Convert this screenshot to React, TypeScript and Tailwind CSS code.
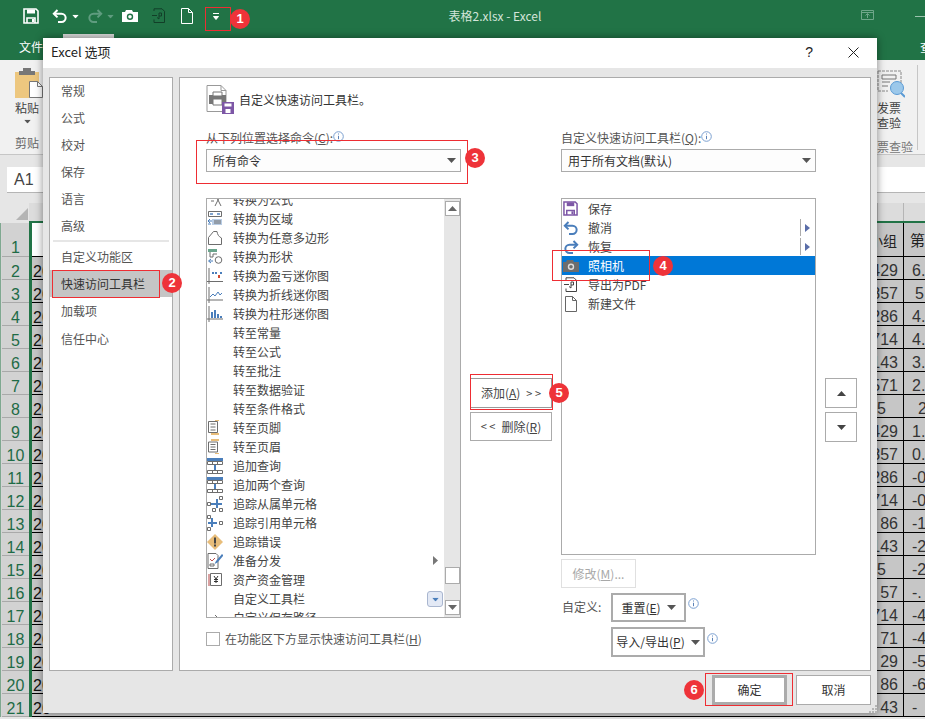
import type { ReactNode } from 'react';

const FONT = 'font-["Noto_Sans_CJK_SC","Liberation_Sans",sans-serif]';

const BLUE = '#4a7ebb';
const GREY = '#6d6d6d';
const ORANGE = '#e8bd7a';

const Svg = ({ children, size = 16, className = '' }: { children: ReactNode; size?: number; className?: string }) => (
  <svg width={size} height={size} viewBox="0 0 16 16" fill="none" className={className}>
    {children}
  </svg>
);

const Caret = ({ color = '#555', className = '' }: { color?: string; className?: string }) => (
  <svg width="9" height="5" viewBox="0 0 9 5" className={className}>
    <path d="M0 0h9L4.5 5z" fill={color} />
  </svg>
);

const Info = ({ className = '' }: { className?: string }) => (
  <svg width="11" height="11" viewBox="0 0 11 11" fill="none" className={className}>
    <circle cx="5.5" cy="5.5" r="4.8" stroke="#7ba0d0" />
    <path d="M5.5 2.5v1M5.5 4.8v3.4" stroke="#5b82b8" />
  </svg>
);

const SaveIcon = ({ color, size = 16 }: { color: string; size?: number }) => (
  <Svg size={size}>
    <path d="M1 1h12l2 2v12H1z" stroke={color} strokeWidth="1.6" />
    <path d="M4 1.5h8v4H4z" fill={color} />
    <path d="M4 15v-5h8v5" stroke={color} strokeWidth="1.6" />
    <path d="M9 11h2v3H9z" fill={color} />
  </Svg>
);

const UndoIcon = ({ color, flip = false }: { color: string; flip?: boolean }) => (
  <Svg className={flip ? '-scale-x-100' : ''}>
    <path d="M5.5 2 1.8 5.7l3.7 3.7" stroke={color} strokeWidth="2" />
    <path d="M2 5.7h7.5a4 4 0 0 1 0 8.3H6" stroke={color} strokeWidth="2" />
  </Svg>
);

const CameraIcon = ({ color, hole }: { color: string; hole: string }) => (
  <Svg>
    <path d="M0 4h3l1-2h6l1 2h5v10H0z" fill={color} />
    <circle cx="8" cy="8.7" r="3.2" fill={hole} />
    <circle cx="8" cy="8.7" r="1.8" fill={color} />
  </Svg>
);

const PageIcon = ({ color }: { color: string }) => (
  <Svg>
    <path d="M2.5.5h7l4 4v11h-11z" stroke={color} />
    <path d="M9.5.5v4h4" stroke={color} />
  </Svg>
);

const PdfIcon = ({ color }: { color: string }) => (
  <Svg>
    <path d="M3 3V.8h8l2.5 2.5v11.200H3v-3" stroke={color} />
    <path d="M8 5h2.500v3H8M8 5v6l-2-1.500M1 7.500h5" stroke={color} />
  </Svg>
);

const RowIcons: Record<string, ReactNode> = {
  formula: (
    <Svg>
      <path d="M1 6V1M1 5h4M8 2l6 12M14 2 8 14M4 9h3" stroke={GREY} />
    </Svg>
  ),
  region: (
    <Svg>
      <path d="M1.5.5h13v5h-13z" stroke={GREY} />
      <path d="M3 2h3v2H3zM10 2h3v2h-3z" fill={BLUE} opacity=".7" />
      <path d="M5 8h10v6H5z" fill="#b9cde5" />
      <path d="M7 10h7M7 12h7" stroke={GREY} />
      <path d="M3 8 1 10l2 2M1 10h4M1 13h3" stroke={BLUE} />
    </Svg>
  ),
  polygon: (
    <Svg>
      <path d="M1.500 14.500V7.500L6.500 1.500h3.500c.5 3 1.500 5 4.500 6.500v6.500z" stroke={GREY} />
    </Svg>
  ),
  shape: (
    <Svg>
      <path d="M1 0h9v3H1z" fill="#6aa58c" />
      <path d="M3 3v5h3V5h4" stroke={GREY} />
      <circle cx="11.5" cy="11" r="3.3" stroke={GREY} />
      <path d="M4 10 1.5 12 4 14M2 12h4" stroke={BLUE} />
    </Svg>
  ),
  winloss: (
    <Svg>
      <path d="M2 0v16M0 13.5h16" stroke={GREY} />
      <path d="M5 4h2v2H5zM8 4h2v2H8zM13 4h2v2h-2z" fill={BLUE} />
      <path d="M11 7h2v3h-2z" fill="#d1482f" />
    </Svg>
  ),
  line: (
    <Svg>
      <path d="M2 0v16M0 13h16" stroke={GREY} />
      <path d="m3 10 3-3 2 2 3-4 2 3 2-2" stroke={BLUE} />
    </Svg>
  ),
  column: (
    <Svg>
      <path d="M2 0v16M0 13h16" stroke={GREY} />
      <path d="M4 6h2v6H4zM7 4h2v8H7zM10 8h2v4h-2zM13 10h2v2h-2z" fill={BLUE} />
    </Svg>
  ),
  footer: (
    <Svg>
      <path d="M1.500 1.500h9v11h-9zM3.500 4h5M3.500 7h5M3.500 10h5" stroke={GREY} />
      <path d="M8 0h4v1H8zM4 13h8v2H4z" fill={ORANGE} />
    </Svg>
  ),
  header: (
    <Svg>
      <path d="M1.500 3h9v10h-9zM3.500 5.500h5M3.500 8h5M3.500 10.500h5" stroke={GREY} />
      <path d="M4 0h8v2H4zM8 14h4v1H8z" fill={ORANGE} />
    </Svg>
  ),
  query: (
    <Svg>
      <path d="M0 0h16v3H0z" fill={BLUE} />
      <path d="M.5 3.500h15v3H.5zM.5 12.500h15v3H.5zM5.500 3.500v3M10.500 3.500v3M5.500 12.500v3M10.500 12.500v3" stroke={GREY} />
      <path d="M7 7h2v5H7z" fill={BLUE} />
    </Svg>
  ),
  dependents: (
    <Svg>
      <path d="M.5 6.500h3v3h-3zM12.500 12.500h3v3h-3zM5.500 12.500h3v3h-3zM12.500.5h3v3h-3z" stroke={GREY} />
      <path d="M10 3v9M6 8h9M4 8h2" stroke={BLUE} strokeWidth="2" />
    </Svg>
  ),
  precedents: (
    <Svg>
      <path d="M.5.5h3v3h-3zM.5 12.500h3v3h-3zM12.500 6.500h3v3h-3z" stroke={GREY} />
      <path d="M5 3v9M1 8h9" stroke={BLUE} strokeWidth="2" />
    </Svg>
  ),
  error: (
    <Svg>
      <path d="M8 0l8 8-8 8-8-8z" fill={ORANGE} />
      <path d="M7 3.500h2v6H7zM7 10.500h2v2H7z" fill="#444" />
    </Svg>
  ),
  prepare: (
    <Svg>
      <path d="M1 .5h8l2 2v13H1z" stroke={GREY} />
      <path d="m3 6 2 2 3-3" stroke="#c0504d" />
      <path d="M3 11h4v2H3z" stroke={GREY} />
      <path d="m15 1-6 7-1.500 3 3-1.500 6-7z" fill={BLUE} />
    </Svg>
  ),
  asset: (
    <Svg>
      <path d="M1 2h2v12H1z" fill="#d9a0a0" />
      <path d="M3.500 1.500h11v12h-11z" stroke={GREY} />
      <path d="m7 4 2 3 2-3M9 7v4M7 7.500h4M7 9.500h4" stroke="#333" />
    </Svg>
  ),
  tail: (
    <Svg>
      <path d="m8 5 3 3" stroke={GREY} />
    </Svg>
  ),
};

const COMMANDS: { label: string; icon?: string }[] = [
  { label: '转换为公式', icon: 'formula' },
  { label: '转换为区域', icon: 'region' },
  { label: '转换为任意多边形', icon: 'polygon' },
  { label: '转换为形状', icon: 'shape' },
  { label: '转换为盈亏迷你图', icon: 'winloss' },
  { label: '转换为折线迷你图', icon: 'line' },
  { label: '转换为柱形迷你图', icon: 'column' },
  { label: '转至常量' },
  { label: '转至公式' },
  { label: '转至批注' },
  { label: '转至数据验证' },
  { label: '转至条件格式' },
  { label: '转至页脚', icon: 'footer' },
  { label: '转至页眉', icon: 'header' },
  { label: '追加查询', icon: 'query' },
  { label: '追加两个查询', icon: 'query' },
  { label: '追踪从属单元格', icon: 'dependents' },
  { label: '追踪引用单元格', icon: 'precedents' },
  { label: '追踪错误', icon: 'error' },
  { label: '准备分发', icon: 'prepare' },
  { label: '资产资金管理', icon: 'asset' },
  { label: '自定义工具栏' },
  { label: '自定义保存路径', icon: 'tail' },
];

const ROW_VALUES = [
  ['429', '6.'], ['857', '5'], ['286', '4.'], ['714', '4.'], ['143', '3.'], ['571', '2.'], ['5', '2'],
  ['429', '1.'], ['857', '0.'], ['286', '-0'], ['714', '-0'], ['86', '-1'], ['143', '-2'], ['5', '-2'],
  ['57', '-.'], ['714', '-4'], ['71', '-4'], ['29', '-5'], ['86', '-6'], ['43', '-'],
];

const NAV_TOP = ['常规', '公式', '校对', '保存', '语言', '高级'];

const MARKS = [
  { n: 1, box: 'left-[205px] top-[7px] w-[26px] h-[24px]', dot: 'left-[230px] top-[9px]' },
  { n: 2, box: 'left-[52px] top-[270px] w-[108px] h-[28px]', dot: 'left-[162px] top-[273px]' },
  { n: 3, box: 'left-[196px] top-[140px] w-[272px] h-[44px]', dot: 'left-[465px] top-[148px]' },
  { n: 4, box: 'left-[552px] top-[250px] w-[98px] h-[31px]', dot: 'left-[653px] top-[256px]' },
  { n: 5, box: 'left-[470px] top-[374px] w-[83px] h-[36px]', dot: 'left-[549px] top-[383px]' },
  { n: 6, box: 'left-[705px] top-[673px] w-[88px] h-[33px]', dot: 'left-[684px] top-[680px]' },
];

function ExcelBehind() {
  return (
    <div className="flex flex-col h-full bg-[#e6e6e6]">
      <div className="h-[38px] pb-[6px] bg-[#217346] flex items-center shrink-0">
        <div className="flex items-center w-[240px] pl-[23px]">
          <SaveIcon color="#ffffff" />
          <div className="ml-[13px]"><UndoIcon color="#ffffff" /></div>
          <Caret color="#ffffff" className="ml-[3px] scale-75" />
          <div className="ml-[7px]"><UndoIcon color="#5f9c7f" flip /></div>
          <Caret color="#5f9c7f" className="ml-[3px] scale-75" />
          <div className="ml-[7px]"><CameraIcon color="#ffffff" hole="#217346" /></div>
          <div className="ml-[13px]"><PdfIcon color="#123f28" /></div>
          <div className="ml-[12px]"><PageIcon color="#ffffff" /></div>
          <svg width="6" height="7" viewBox="0 0 6 7" className="ml-[18px]">
            <path d="M0 .5h6M.5 3.500h5L3 6.500z" stroke="#fff" fill="#fff" strokeWidth="1" />
          </svg>
        </div>
        <div className="flex-1 text-center text-[12px] text-[#d3e5da] pr-[111px]">表格2.xlsx - Excel</div>
        <svg width="14" height="12" viewBox="0 0 14 12" fill="none" className="mr-[40px]">
          <path d="M.5.5h12v9H.5zM.5 2.500h12M6.500 8V4M4.500 5.500l2-2 2 2" stroke="#6ea78a" />
        </svg>
        <div className="w-[10px] h-px bg-[#9cc4ae]" />
      </div>
      <div className="h-[22px] bg-[#217346] shrink-0 flex items-start text-white text-[12px] leading-[18px]">
        <span className="ml-[19px]">文件</span>
        <span className="ml-[20px] -mt-[4px] w-[51px] h-[4px] bg-[#d9d9d9]" />
        <span className="ml-auto mr-[-19px]">查看</span>
      </div>
      <div className="h-[95px] bg-[#f1f1f1] border-b border-[#c6c6c6] shrink-0 flex justify-between">
        <div className="pl-[15px] pt-[8px] flex flex-col text-[12px] leading-[16px] text-[#444]">
          <svg width="28" height="30" viewBox="0 0 28 30">
            <path d="M0 4h24v26H0z" fill="#edc77f" />
            <path d="M8 0h8v3h4v4H4V3h4z" fill="#777" />
            <path d="M14.500 13.500h8l5 5v11h-13z" fill="#fff" stroke="#777" />
            <path d="M22.500 13.500v5h5" fill="none" stroke="#777" />
          </svg>
          <span className="mt-[2px]">粘贴</span>
          <Caret className="ml-[8px] mt-[3px] scale-75" />
          <span className="mt-[11px] text-[#666]">剪贴</span>
        </div>
        <div className="w-[48px] flex">
          <div className="w-[40px] flex flex-col text-[12px] leading-[15px] text-[#444]">
            <svg width="28" height="28" viewBox="0 0 28 28" fill="none" className="mt-[10px]">
              <path d="M1 1h23v17M1 1v20h10" stroke="#888" strokeDasharray="3 1" />
              <path d="M5 5h14v4H5zM5 12h8M5 16h6" stroke="#777" />
              <circle cx="20" cy="18" r="6.500" fill="#9cc8ea" stroke="#5b9bd5" />
              <path d="m24 23 4 4" stroke="#5b9bd5" strokeWidth="2" />
            </svg>
            <span className="mt-[2px]">发票</span>
            <span>查验</span>
            <span className="mt-[9px] text-[#777] whitespace-nowrap">票查验</span>
          </div>
          <div className="w-px h-[85px] mt-[5px] bg-[#c6c6c6]" />
        </div>
      </div>
      <div className="h-[48px] shrink-0 pt-[12px] pl-[7px]">
        <div className="h-[26px] bg-white border-b border-[#b5b5b5] flex items-center">
          <span className="ml-[7px] text-[16px] text-[#444] font-['Liberation_Sans',sans-serif]">A1</span>
        </div>
      </div>
      <div className="h-[20px] shrink-0 flex bg-[#dcdcdc]">
        <div className="w-[29px] pl-[16px] pt-[5px] bg-[#e6e6e6]">
          <div className="w-0 h-0 border-l-[12px] border-l-transparent border-b-[12px] border-b-[#b4b4b4]" />
        </div>
        <div className="flex-1 border-b-2 border-[#217346] flex justify-end">
          <div className="w-[26px] border-l border-[#b5b5b5]" />
          <div className="w-[22px] border-l border-[#b5b5b5]" />
        </div>
      </div>
      <div className="flex h-[34px] shrink-0 font-['Liberation_Sans',sans-serif] text-[16px]">
        <div className="w-[2px] bg-[#d5d5d5] border-l border-[#7fa890]" />
        <div className="w-[27px] bg-[#d2d2d2] border-b border-[#a9a9a9] text-[#1e6b46] text-center flex items-end justify-center leading-[16px]">1</div>
        <div className="w-[3px] bg-[#217346]" />
        <div className="flex-1 bg-white border-b border-black" />
        <div className="w-[26px] bg-[#c6c6c6] border-b border-black flex items-center justify-end whitespace-nowrap pr-[6px] pt-[2px] text-[#222] text-[14px]">
          <span className={FONT}>小组</span>
        </div>
        <div className="w-[22px] bg-[#c6c6c6] border-b border-l border-black pl-[6px] pt-[2px] flex items-center text-[15px] text-[#222] overflow-hidden">
          <span className={FONT}>第</span>
        </div>
      </div>
      {ROW_VALUES.map(([a, b], i) => (
        <div key={i} className="flex h-[23px] shrink-0 font-['Liberation_Sans',sans-serif] text-[16px] leading-[27px]">
          <div className="w-[2px] bg-[#d5d5d5] border-l border-[#7fa890]" />
          <div className="w-[27px] bg-[#d2d2d2] border-b border-[#a9a9a9] text-[#1e6b46] text-center overflow-hidden leading-[30px]">{i + 2}</div>
          <div className="w-[3px] bg-[#217346]" />
          <div className="flex-1 bg-[#c6c6c6] border-b border-black pl-[1px] text-[#111] overflow-hidden leading-[30px]">20</div>
          <div className={`w-[26px] bg-[#c6c6c6] border-b border-black text-[#333] whitespace-nowrap flex justify-end ${a === '5' ? 'pr-[17px]' : 'pr-[5px]'}`}>{a}</div>
          <div className={`w-[22px] bg-[#c6c6c6] border-b border-l border-black text-[#333] overflow-hidden whitespace-nowrap ${b === '2' ? 'pl-[14px]' : b === '5' ? 'pl-[11px]' : 'pl-[8px]'}`}>{b}</div>
        </div>
      ))}
    </div>
  );
}

function NavItem({ label }: { label: string }) {
  return <div className="h-[28px] flex items-center pl-[11px]">{label}</div>;
}

function SelectBox({ label }: { label: string }) {
  return (
    <div className="h-[23px] border border-[#ababab] bg-[#fdfdfd] flex items-center justify-between pl-[6px] pr-[4px] text-[#333]">
      {label}
      <Caret />
    </div>
  );
}

function ScrollBtn({ down }: { down?: boolean }) {
  return (
    <div className="w-[15px] h-[15px] bg-white border border-[#ababab] flex items-center justify-center">
      <Caret color="#666" className={down ? '' : 'rotate-180'} />
    </div>
  );
}

function CommandList() {
  return (
    <div className="relative h-[420px] border border-[#ababab] bg-white flex overflow-hidden">
      <div className="flex-1 -mt-[9px]">
        {COMMANDS.map(c => (
          <div key={c.label} className="relative h-[19px] flex items-center whitespace-nowrap text-[#444]">
            <div className="w-[26px] shrink-0">{c.icon && RowIcons[c.icon]}</div>
            {c.label}
            {c.label === '准备分发' && <Caret color="#777" className="absolute left-[224px] top-[7px] -rotate-90" />}
          </div>
        ))}
      </div>
      <div className="w-[16px] bg-[#e6e6e6] flex flex-col items-center pt-[2px]">
        <ScrollBtn />
        <div className="mt-[351px] w-[15px] h-[17px] bg-white border border-[#ababab]" />
        <div className="mt-[16px]"><ScrollBtn down /></div>
      </div>
      {/* popup arrow over the last rows */}
      <div className="absolute left-[220px] top-[392px] w-[16px] h-[16px] rounded-[3px] border border-[#a9b6cf] bg-[#e3e9f5] flex items-center justify-center">
        <Caret color={BLUE} className="scale-75" />
      </div>
    </div>
  );
}

function ToolbarList() {
  const Split = () => (
    <div className="ml-auto mr-[5px] flex items-center gap-[4px]">
      <div className="w-px h-[17px] bg-[#ababab]" />
      <svg width="5" height="8" viewBox="0 0 5 8"><path d="M0 0l5 4-5 4z" fill="#5a6da8" /></svg>
    </div>
  );
  return (
    <div className="h-[357px] border border-[#ababab] bg-white text-[#444]">
      <div className="h-[19px] flex items-center"><div className="w-[26px] pl-[1px]"><SaveIcon color="#7d57a6" size={15} /></div>保存</div>
      <div className="h-[19px] flex items-center"><div className="w-[26px] pl-[1px]"><UndoIcon color={BLUE} /></div>撤消<Split /></div>
      <div className="h-[19px] flex items-center"><div className="w-[26px] pl-[1px]"><UndoIcon color={BLUE} flip /></div>恢复<Split /></div>
      <div className="h-[19px] flex items-center bg-[#0078d7] text-white"><div className="w-[26px] pl-[1px]"><CameraIcon color="#6d6d6d" hole="#dddddd" /></div>照相机</div>
      <div className="h-[19px] flex items-center"><div className="w-[26px] pl-[1px]"><PdfIcon color="#444" /></div>导出为PDF</div>
      <div className="h-[19px] flex items-center"><div className="w-[26px] pl-[1px]"><PageIcon color="#666" /></div>新建文件</div>
    </div>
  );
}

function Dialog() {
  return (
    <div className={`absolute left-[43px] top-[38px] w-[834px] h-[675px] bg-[#e6e6e6] shadow-[0_0_8px_rgba(0,0,0,0.45)] flex flex-col text-[12px] ${FONT}`}>
      <div className="h-[30px] pb-[2px] bg-white flex items-center pl-[8px] shrink-0 text-[13px] text-[#222]">
        <span>Excel 选项</span>
        <span className="ml-auto text-[14px] font-['Liberation_Sans',sans-serif]">?</span>
        <svg width="11" height="11" viewBox="0 0 11 11" className="ml-[35px] mr-[18px]">
          <path d="M.5.5l10 10M10.500.5l-10 10" stroke="#222" />
        </svg>
      </div>
      <div className="flex gap-[6px] pt-[9px] px-[6px] shrink-0">
        <div className="w-[124px] h-[594px] border border-[#ababab] bg-white text-[#555]">
          {NAV_TOP.map(t => (
            <div key={t} className="h-[27px] pb-[2px] flex items-center pl-[11px]">{t}</div>
          ))}
          <div className="mx-[3px] h-[2px] mb-[1px] bg-[#e6e6e6]" />
          <div className="h-[27px] flex items-center pl-[11px]">自定义功能区</div>
          <div className="h-[27px] flex items-center pl-[11px] bg-[#c5c5c5] text-[#333]">快速访问工具栏</div>
          <NavItem label="加载项" />
          <NavItem label="信任中心" />
        </div>
        <div className="w-[692px] h-[594px] border border-[#ababab] bg-white pl-[26px] pt-[7px] text-[#555]">
          <div className="flex items-center h-[29px] text-[#333]">
            <svg width="29" height="30" viewBox="0 0 29 30" fill="none">
              <path d="M1 .5h14l5 5v21H1z" stroke="#999" fill="#fff" />
              <path d="M15 .5v5h5" stroke="#999" />
              <path d="M3 10h17v9H3z" fill="#777" />
              <path d="M7 7h9v4H7z" fill="#fff" stroke="#777" />
              <path d="M7 14h9v6H7z" fill="#fff" stroke="#777" />
              <path d="M16 17h12v12H16z" fill="#7d57a6" />
              <path d="M18.500 18.500h7v3h-7zM19.500 24h5v4h-5z" fill="#fff" />
            </svg>
            <span className="ml-[4px] text-[12px]">自定义快速访问工具栏。</span>
          </div>
          <div className="flex mt-[15px]">
            <div className="w-[255px]">
              <div className="h-[20px] leading-[18px] flex items-start whitespace-nowrap">
                从下列位置选择命令(<span className="underline">C</span>):
                <Info className="mt-[2px]" />
              </div>
              <SelectBox label="所有命令" />
              <div className="h-[26px]" />
              <CommandList />
              <label className="mt-[12px] flex items-center">
                <span className="w-[14px] h-[14px] border border-[#ababab] bg-white" />
                <span className="ml-[5px]">在功能区下方显示快速访问工具栏(<span className="underline">H</span>)</span>
              </label>
            </div>
            <div className="w-[82px] ml-[9px] mr-[9px] pt-[249px] flex flex-col gap-[4px] text-[#444]">
              <div className="h-[30px] border border-[#9a9a9a] bg-white flex items-center justify-center gap-[6px] whitespace-nowrap">
                <span>添加(<span className="underline">A</span>)</span>
                <span className="text-[11px]">&gt; &gt;</span>
              </div>
              <div className="h-[29px] border border-[#ababab] bg-white flex items-center justify-center gap-[6px] whitespace-nowrap">
                <span className="text-[11px]">&lt; &lt;</span>
                <span>删除(<span className="underline">R</span>)</span>
              </div>
            </div>
            <div className="w-[255px]">
              <div className="h-[20px] leading-[18px] flex items-start whitespace-nowrap">
                自定义快速访问工具栏(<span className="underline">Q</span>):
                <Info className="mt-[2px]" />
              </div>
              <SelectBox label="用于所有文档(默认)" />
              <div className="h-[26px]" />
              <ToolbarList />
              <div className="mt-[4px] w-[75px] h-[29px] border border-[#e0e0e0] text-[#a8a8a8] flex items-center justify-center">
                修改(<span className="underline">M</span>)...
              </div>
              <div className="flex mt-[5px]">
                <span className="w-[50px] mt-[5px] pl-[1px]">自定义:</span>
                <div className="flex flex-col gap-[5px] text-[#333]">
                  <div className="flex items-start gap-[2px]">
                    <div className="w-[75px] h-[29px] border-2 border-[#ababab] bg-white flex items-center justify-center gap-[6px]">
                      <span>重置(<span className="underline">E</span>)</span>
                      <Caret />
                    </div>
                    <Info className="mt-[5px]" />
                  </div>
                  <div className="flex items-start gap-[2px]">
                    <div className="w-[94px] h-[30px] border-2 border-[#ababab] bg-white flex items-center justify-center gap-[6px]">
                      <span>导入/导出(<span className="underline">P</span>)</span>
                      <Caret />
                    </div>
                    <Info className="mt-[6px]" />
                  </div>
                </div>
              </div>
            </div>
            <div className="ml-[9px] pt-[249px] flex flex-col gap-[4px]">
              <div className="w-[32px] h-[30px] border border-[#ababab] bg-white flex items-center justify-center">
                <Caret color="#444" className="rotate-180" />
              </div>
              <div className="w-[32px] h-[30px] border border-[#ababab] bg-white flex items-center justify-center">
                <Caret color="#444" />
              </div>
            </div>
          </div>
        </div>
      </div>
      <div className="flex justify-end gap-[9px] pt-[4px] pr-[6px] text-[#333] relative flex-1">
        <div className="w-[75px] h-[30px] border-[3px] border-[#ababab] bg-white flex items-center justify-center">确定</div>
        <div className="w-[75px] h-[30px] border border-[#ababab] bg-white flex items-center justify-center">取消</div>
        <svg width="8" height="8" viewBox="0 0 8 8" className="absolute right-0 bottom-0">
          <path d="M6 0h2v2H6zM3 3h2v2H3zM6 3h2v2H6zM0 6h2v2H0zM3 6h2v2H3zM6 6h2v2H6z" fill="#b5b5b5" />
        </svg>
      </div>
    </div>
  );
}

export default function App() {
  return (
    <div className={`relative w-[925px] h-[719px] overflow-hidden ${FONT}`}>
      <ExcelBehind />
      <Dialog />
      {MARKS.map(m => (
        <div key={m.n}>
          <div className={`absolute border border-[#ee2d33] ${m.box}`} />
          <div className={`absolute w-[20px] h-[20px] rounded-full bg-[#ee3339] text-white text-[13px] font-bold flex items-center justify-center font-['Liberation_Sans',sans-serif] ${m.dot}`}>
            {m.n}
          </div>
        </div>
      ))}
    </div>
  );
}
